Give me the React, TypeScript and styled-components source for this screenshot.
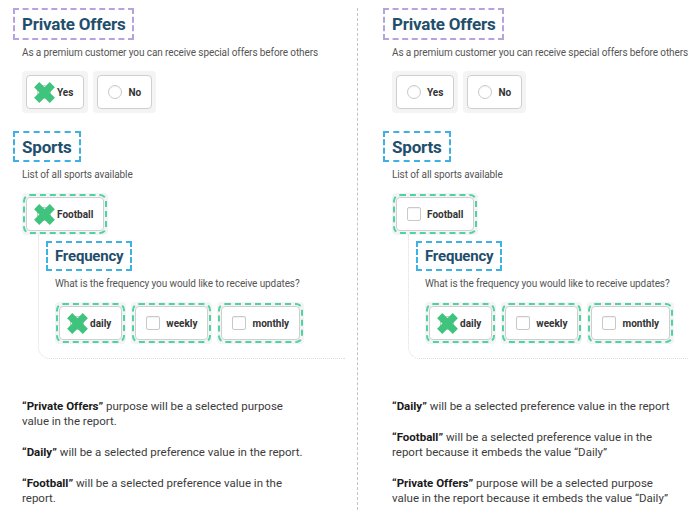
import React from "react";
import styled, { createGlobalStyle } from "styled-components";

const GlobalStyle = createGlobalStyle`
  html, body {
    margin: 0;
    padding: 0;
    background: #ffffff;
  }
  body {
    font-family: Roboto, "Liberation Sans", sans-serif;
    color: #333;
  }
`;

const Page = styled.div`
  display: flex;
  width: 688px;
  height: 514px;
  overflow: hidden;
  background: #fff;
`;

const Column = styled.div`
  flex: 0 0 345px;
  width: 345px;
  padding: 8px 0 0 22px;
  box-sizing: border-box;
`;

const Divider = styled.div`
  flex: 0 0 auto;
  margin: 8px 12px 4px 12px;
  border-left: 1.5px dashed #c4c4c4;
`;

const HeadingBox = styled.div<{ $tone: "purple" | "blue"; $size: number; $h: number }>`
  display: inline-flex;
  align-items: center;
  box-sizing: border-box;
  height: ${(p) => p.$h}px;
  margin-left: -9px;
  padding: 0 7px;
  border: 2px dashed ${(p) => (p.$tone === "purple" ? "#b7a2de" : "#3fb0e4")};
  font-size: ${(p) => p.$size}px;
  font-weight: 700;
  color: #1f4f6c;
  letter-spacing: -0.2px;
`;

const Section = styled.div<{ $gap?: number }>`
  margin-top: ${(p) => p.$gap ?? 0}px;
`;

const Hint = styled.p`
  margin: 6px 0 0;
  font-size: 10px;
  line-height: 14px;
  letter-spacing: -0.1px;
  color: #555;
  white-space: nowrap;
`;

const OptionRow = styled.div`
  display: flex;
  gap: 5px;
  margin-top: 11px;
`;

const OptionCard = styled.div`
  padding: 4px;
  background: #f4f4f4;
  border-radius: 4px;
`;

const OptionBox = styled.div<{ $marked?: boolean }>`
  display: flex;
  align-items: center;
  gap: 6px;
  height: 34px;
  box-sizing: border-box;
  padding: 0 10px;
  background: #fff;
  border: 1px solid #cfcfcf;
  border-radius: 4px;
  font-size: 10px;
  font-weight: 700;
  color: #333;
  outline: ${(p) => (p.$marked ? "2px dashed #4fd3a2" : "none")};
  outline-offset: 1px;
`;

const Indicator = styled.span<{ $kind: "radio" | "check" }>`
  position: relative;
  flex: 0 0 14px;
  width: 14px;
  height: 14px;
  box-sizing: border-box;
  border: 1px solid #c9c9c9;
  border-radius: ${(p) => (p.$kind === "radio" ? "50%" : "2px")};
  background: #fff;
  box-shadow: inset 0 1px 1px rgba(0, 0, 0, 0.06);
`;

const Cross = styled.svg`
  position: absolute;
  left: -6px;
  top: -6px;
  width: 25px;
  height: 25px;
`;

const Panel = styled.div`
  margin-left: 16px;
  padding: 6px 0 14px 16px;
  border-left: 1px dotted #dcdcdc;
  border-bottom: 1px dotted #dcdcdc;
  border-bottom-left-radius: 12px;
`;

const Notes = styled.div`
  margin-top: 40px;
  max-width: 288px;
`;

const Note = styled.p`
  margin: 0 0 16px;
  font-size: 11.5px;
  line-height: 15px;
  color: #3c3c3c;

  b {
    color: #1a1a1a;
  }
`;

const XMark = () => (
  <Cross viewBox="0 0 24 24">
    <path d="M4.5 4.5 L19.5 19.5 M19.5 4.5 L4.5 19.5" stroke="#3ec47c" strokeWidth="7" fill="none" />
  </Cross>
);

interface OptionProps {
  label: string;
  kind: "radio" | "check";
  selected?: boolean;
  marked?: boolean;
}

const Option = ({ label, kind, selected, marked }: OptionProps) => (
  <OptionCard>
    <OptionBox $marked={marked}>
      <Indicator $kind={kind}>{selected && <XMark />}</Indicator>
      {label}
    </OptionBox>
  </OptionCard>
);

interface Variant {
  yes: boolean;
  football: boolean;
  notes: React.ReactNode[];
}

const variants: Variant[] = [
  {
    yes: true,
    football: true,
    notes: [
      <>
        <b>“Private Offers”</b> purpose will be a selected purpose value in the report.
      </>,
      <>
        <b>“Daily”</b> will be a selected preference value in the report.
      </>,
      <>
        <b>“Football”</b> will be a selected preference value in the report.
      </>,
    ],
  },
  {
    yes: false,
    football: false,
    notes: [
      <>
        <b>“Daily”</b> will be a selected preference value in the report
      </>,
      <>
        <b>“Football”</b> will be a selected preference value in the report because it embeds the value “Daily”
      </>,
      <>
        <b>“Private Offers”</b> purpose will be a selected purpose value in the report because it embeds the value
        “Daily”
      </>,
    ],
  },
];

const Example = ({ v }: { v: Variant }) => (
  <Column>
    <Section>
      <HeadingBox $tone="purple" $size={17} $h={32}>
        Private Offers
      </HeadingBox>
      <Hint>As a premium customer you can receive special offers before others</Hint>
      <OptionRow>
        <Option label="Yes" kind="radio" selected={v.yes} />
        <Option label="No" kind="radio" />
      </OptionRow>
    </Section>

    <Section $gap={18}>
      <HeadingBox $tone="blue" $size={17} $h={31}>
        Sports
      </HeadingBox>
      <Hint>List of all sports available</Hint>
      <OptionRow>
        <Option label="Football" kind="check" selected={v.football} marked />
      </OptionRow>
      <Panel>
        <HeadingBox $tone="blue" $size={15} $h={30}>
          Frequency
        </HeadingBox>
        <Hint>What is the frequency you would like to receive updates?</Hint>
        <OptionRow>
          <Option label="daily" kind="check" selected marked />
          <Option label="weekly" kind="check" marked />
          <Option label="monthly" kind="check" marked />
        </OptionRow>
      </Panel>
    </Section>

    <Notes>
      {v.notes.map((n, i) => (
        <Note key={i}>{n}</Note>
      ))}
    </Notes>
  </Column>
);

const App = () => (
  <>
    <GlobalStyle />
    <Page>
      <Example v={variants[0]} />
      <Divider />
      <Example v={variants[1]} />
    </Page>
  </>
);

export default App;
